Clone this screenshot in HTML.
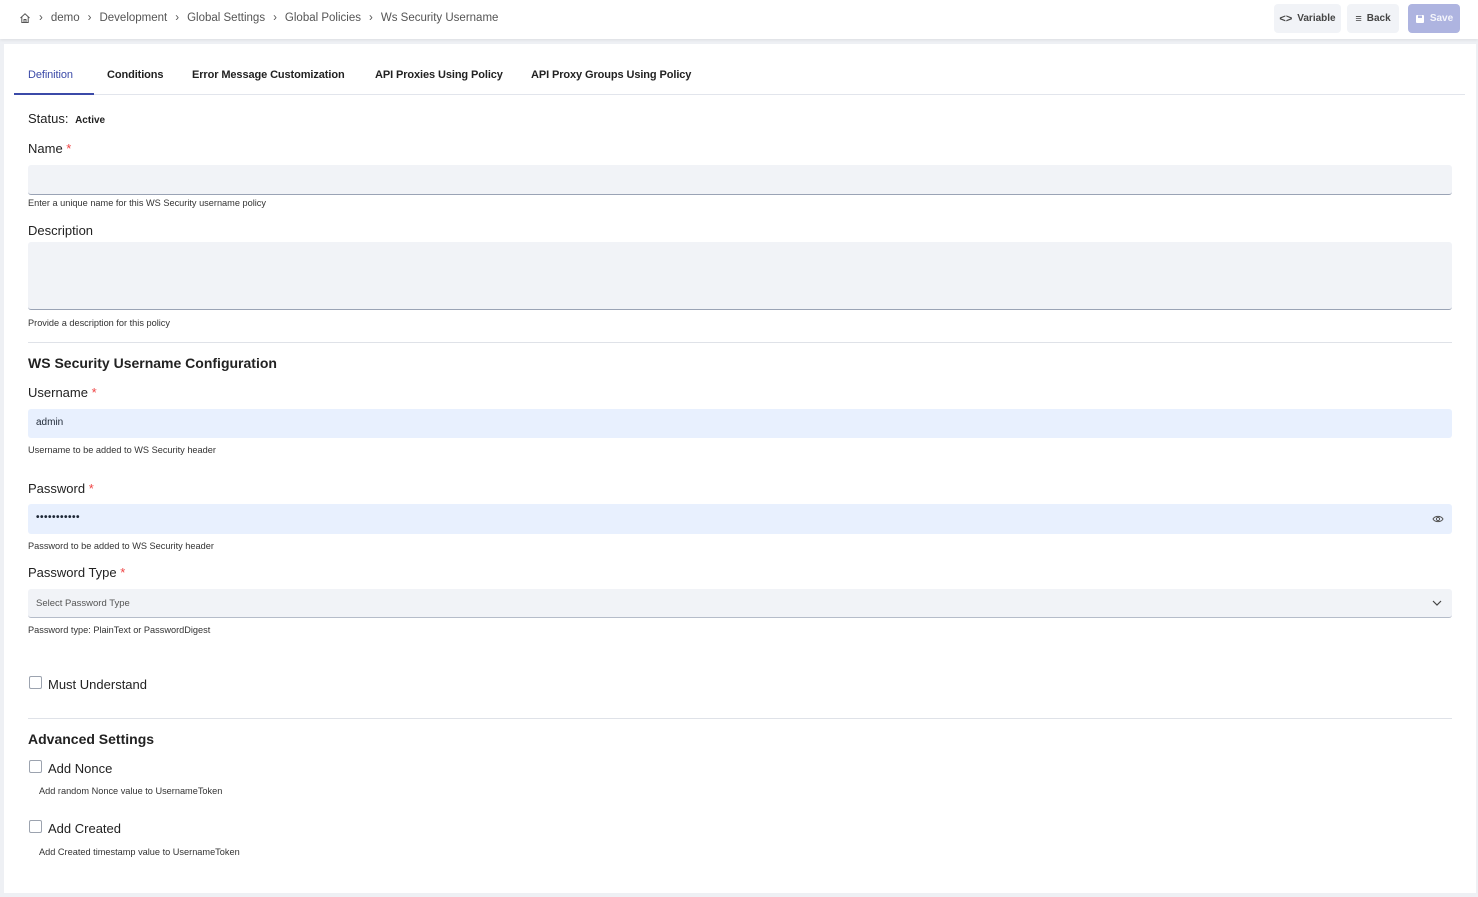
<!DOCTYPE html>
<html><head><style>
*{box-sizing:border-box;margin:0;padding:0}
body{width:1478px;height:897px;background:#eef0f4;font-family:"Liberation Sans",sans-serif;color:#1f2937;position:relative;overflow:hidden}
.hdr{position:absolute;left:0;top:0;width:1478px;height:39px;background:#fff;box-shadow:0 1px 3px rgba(0,0,0,.08)}
.bc{position:absolute;left:19px;top:12px;font-size:11.5px;color:#555;display:flex;align-items:center}
.bc .s{margin:0 8px;color:#555}
.btn{position:absolute;top:4px;height:29px;border-radius:4px;background:#f1f3f7;font-size:10px;color:#444;display:flex;align-items:center;justify-content:center;gap:5px;font-weight:bold}
.card{position:absolute;left:4px;top:44px;width:1472px;height:849px;background:#fff}
.tabs{position:absolute;left:10px;top:0;width:1451px;height:51px;border-bottom:1px solid #e2e5ec}
.tab{position:absolute;top:25px;font-size:11px;font-weight:bold;color:#222;letter-spacing:-0.1px}
.abs{position:absolute}
.lbl{position:absolute;left:24px;font-size:13px;color:#222}
.lbl b{color:#ef4444;font-weight:normal}
.help{position:absolute;left:24px;font-size:9.2px;color:#333}
.inp{position:absolute;left:24px;width:1424px;border-radius:3px}
.h2{position:absolute;left:24px;font-size:14px;font-weight:bold;color:#222}
.hr{position:absolute;left:24px;width:1424px;height:1px;background:#dfe2e8}
.cb{position:absolute;left:25px;width:13px;height:13px;border:1.5px solid #9ca3af;border-radius:2px}
</style></head><body>
<div class="hdr">
<div class="bc"><svg width="12" height="12" viewBox="0 0 12 12" fill="none" stroke="#555" stroke-width="1"><path d="M1.5 6L6 1.8 10.5 6M2.8 5v5.5h6.4V5M5 10.5V7.5h2v3"/></svg><span class="s">›</span>demo<span class="s">›</span>Development<span class="s">›</span>Global Settings<span class="s">›</span>Global Policies<span class="s">›</span>Ws Security Username</div>
<div class="btn" style="left:1274px;width:67px"><span style="font-size:11px">&lt;&gt;</span>Variable</div>
<div class="btn" style="left:1347px;width:52px"><span style="font-size:11px">≡</span>Back</div>
<div class="btn" style="left:1408px;width:52px;background:#aeb4e0;color:#f4f5fb"><svg width="10" height="10" viewBox="0 0 10 10"><rect x="1" y="1" width="8" height="8" rx="1" fill="#fff"/><rect x="3" y="1.5" width="4" height="2.5" fill="#aeb4e0"/></svg>Save</div>
</div>
<div class="card">
<div class="tabs">
<div class="tab" style="left:14px;color:#3b4aa8;font-weight:normal">Definition</div>
<div class="abs" style="left:0;top:49px;width:80px;height:2px;background:#3b4aa8"></div>
<div class="tab" style="left:93px">Conditions</div>
<div class="tab" style="left:178px">Error Message Customization</div>
<div class="tab" style="left:361px">API Proxies Using Policy</div>
<div class="tab" style="left:517px">API Proxy Groups Using Policy</div>
</div>
<div class="lbl" style="top:67px">Status: <span style="font-size:10px;font-weight:bold;margin-left:3px">Active</span></div>
<div class="lbl" style="top:97px">Name <b>*</b></div>
<div class="inp" style="top:121px;height:30px;background:#f1f3f7;border-bottom:1px solid #9aa3b5"></div>
<div class="help" style="top:154px">Enter a unique name for this WS Security username policy</div>
<div class="lbl" style="top:179px">Description</div>
<div class="inp" style="top:198px;height:68px;background:#f1f3f7;border-bottom:1px solid #9aa3b5"></div>
<div class="help" style="top:274px">Provide a description for this policy</div>
<div class="hr" style="top:298px"></div>
<div class="h2" style="top:311px">WS Security Username Configuration</div>
<div class="lbl" style="top:341px">Username <b>*</b></div>
<div class="inp" style="top:365px;height:29px;background:#e8f0fe;font-size:10px;padding:8px 8px">admin</div>
<div class="help" style="top:401px">Username to be added to WS Security header</div>
<div class="lbl" style="top:437px">Password <b>*</b></div>
<div class="inp" style="top:460px;height:30px;background:#e8f0fe;font-size:10px;padding:8px 8px;font-weight:bold;letter-spacing:0.5px">•••••••••••
<svg style="position:absolute;right:8px;top:10px" width="12" height="10" viewBox="0 0 12 10" fill="none" stroke="#555" stroke-width="1"><path d="M1 5C3 1.5 9 1.5 11 5 9 8.5 3 8.5 1 5Z"/><circle cx="6" cy="5" r="1.6"/></svg></div>
<div class="help" style="top:497px">Password to be added to WS Security header</div>
<div class="lbl" style="top:521px">Password Type <b>*</b></div>
<div class="inp" style="top:545px;height:29px;background:#f1f3f7;border-bottom:1px solid #b5bcc9;font-size:9.5px;color:#555;padding:9px 8px">Select Password Type
<svg style="position:absolute;right:10px;top:11px" width="10" height="6" viewBox="0 0 10 6" fill="none" stroke="#444" stroke-width="1.2"><path d="M1 1l4 4 4-4"/></svg></div>
<div class="help" style="top:581px">Password type: PlainText or PasswordDigest</div>
<div class="cb" style="top:632px"></div>
<div class="lbl" style="top:633px;left:44px">Must Understand</div>
<div class="hr" style="top:674px"></div>
<div class="h2" style="top:687px">Advanced Settings</div>
<div class="cb" style="top:716px"></div>
<div class="lbl" style="top:717px;left:44px">Add Nonce</div>
<div class="help" style="top:742px;left:35px">Add random Nonce value to UsernameToken</div>
<div class="cb" style="top:776px"></div>
<div class="lbl" style="top:777px;left:44px">Add Created</div>
<div class="help" style="top:803px;left:35px">Add Created timestamp value to UsernameToken</div>
</div>
</body></html>
